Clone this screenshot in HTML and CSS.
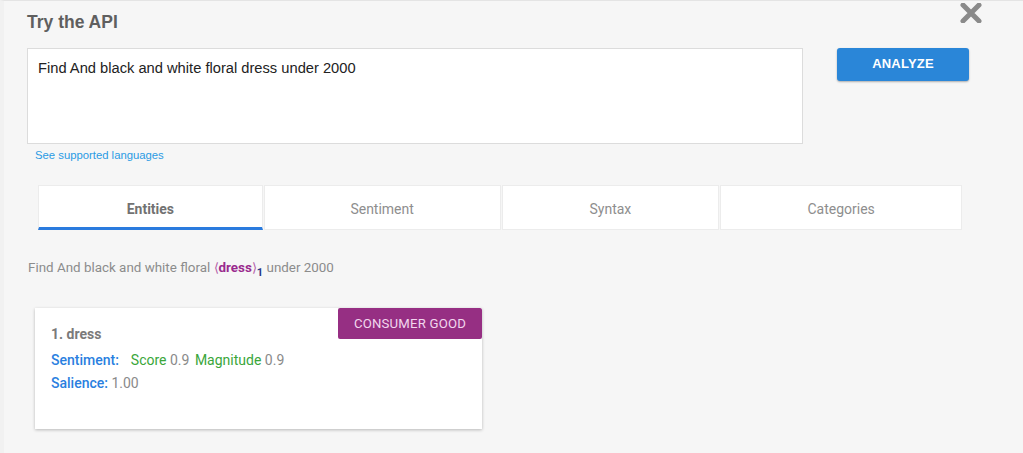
FILE: index.html
```html
<!DOCTYPE html>
<html>
<head>
<meta charset="utf-8">
<link rel="stylesheet" href="styles.css">
</head>
<body>
<div class="page">
  <div class="close" aria-label="close">
    <svg width="22" height="20" viewBox="0 0 22 20"><path d="M3 2 L19 18 M19 2 L3 18" stroke="#8a8a8a" stroke-width="5" stroke-linecap="round"/></svg>
  </div>
  <h1 class="title">Try the API</h1>
  <div class="input-row">
    <div class="input-col">
      <div class="textarea">Find And black and white floral dress under 2000</div>
      <a class="langs">See supported languages</a>
    </div>
    <button class="analyze">ANALYZE</button>
  </div>
  <div class="tabs">
    <div class="tab active t1">Entities</div>
    <div class="tab t2">Sentiment</div>
    <div class="tab t3">Syntax</div>
    <div class="tab t4">Categories</div>
  </div>
  <p class="annotated">Find And black and white floral <span class="br">⟨</span><b class="ent">dress</b><span class="br">⟩</span><sub class="idx">1</sub> under 2000</p>
  <div class="card">
    <div class="badge">CONSUMER GOOD</div>
    <div class="name">1. dress</div>
    <div class="line l1"><span class="lbl">Sentiment:</span><span class="g first">Score</span> 0.9 <span class="g second">Magnitude</span> 0.9</div>
    <div class="line l2"><span class="lbl">Salience:</span> 1.00</div>
  </div>
</div>
</body>
</html>
```
FILE: styles.css
```css
html, body { margin: 0; padding: 0; }
body {
  width: 1023px; height: 453px; overflow: hidden;
  background: #f6f6f6;
  font-family: "Liberation Sans", Arial, sans-serif;
}
.page {
  position: relative;
  height: 452px;
  border-top: 1px solid #e4e4e4;
  border-left: 4px solid #f1f1f1;
  padding: 0 0 0 23px;
}
.close { position: absolute; left: 956px; top: 2px; }
.title {
  margin: 0; padding-top: 9px;
  font-size: 17.5px; font-weight: bold; color: #5f5f5f;
  line-height: 24px; height: 38px;
}
.input-row { display: flex; align-items: flex-start; }
.input-col { width: 776px; }
.textarea {
  height: 84px;
  background: #fff;
  border: 1px solid #dcdcdc;
  padding: 10px 10px 0 10px;
  font-size: 14.7px; color: #222; line-height: 18px;
}
.langs {
  display: block; margin: 5px 0 0 8px;
  font-size: 11.3px; color: #2a9be4; line-height: 13px;
}
.analyze {
  margin-left: 34px;
  width: 132px; height: 33px;
  background: #2a86d8; color: #fff;
  border: 0; border-radius: 3px;
  box-shadow: 0 1px 2px rgba(0,0,0,0.3);
  font-family: "Liberation Sans", Arial, sans-serif;
  font-weight: bold; font-size: 13px; letter-spacing: 0.2px;
  padding: 0 0 2px;
}
.tabs {
  display: flex; margin: 23px 0 0 11px; width: 925px; height: 45px;
  font-family: Roboto, "Liberation Sans", sans-serif;
}
.tab {
  background: #fff;
  border: 1px solid #ececec;
  display: flex; align-items: center; justify-content: center;
  font-size: 14px; color: #8e8e8e;
  box-sizing: border-box; margin-right: 1px;
  padding-top: 2px;
}
.tab.active { color: #727272; font-weight: 700; border-bottom: 3px solid #2a7bde; padding-top: 4px; }
.t1 { width: 225px; }
.t2 { width: 237px; }
.t3 { width: 218px; }
.t4 { width: 242px; }
.annotated {
  margin: 30px 0 0 1px;
  font-family: Roboto, "Liberation Sans", sans-serif;
  font-size: 13.4px; color: #8c8c8c; line-height: 16px;
}
.br { color: #b35ca8; }
.ent { color: #9a2a8e; font-weight: bold; }
.idx { color: #2a3a8a; font-weight: bold; font-size: 11px; vertical-align: -4px; line-height: 0; }
.card {
  position: relative;
  margin: 32px 0 0 8px;
  width: 447px; height: 121px; box-sizing: border-box;
  background: #fff;
  box-shadow: 0 1px 3px rgba(0,0,0,0.25);
  padding: 18px 16px 0 16px;
  font-family: Roboto, "Liberation Sans", sans-serif;
  font-size: 14px; color: #8a8a8a;
}
.badge {
  position: absolute; right: 0; top: 0;
  width: 144px; height: 31px;
  background: #962f83; color: #f2d7ee;
  border-radius: 2px;
  display: flex; align-items: center; justify-content: center;
  font-size: 13.2px; letter-spacing: 0.2px;
}
.name { font-weight: bold; color: #7a7a7a; line-height: 16px; }
.line { line-height: 16px; }
.l1 { margin-top: 10px; }
.l2 { margin-top: 7px; }
.lbl { color: #2a7fe0; font-weight: 500; }
.g { color: #3aa63a; }
.g.first { margin-left: 12px; }
.g.second { margin-left: 2px; }
```
